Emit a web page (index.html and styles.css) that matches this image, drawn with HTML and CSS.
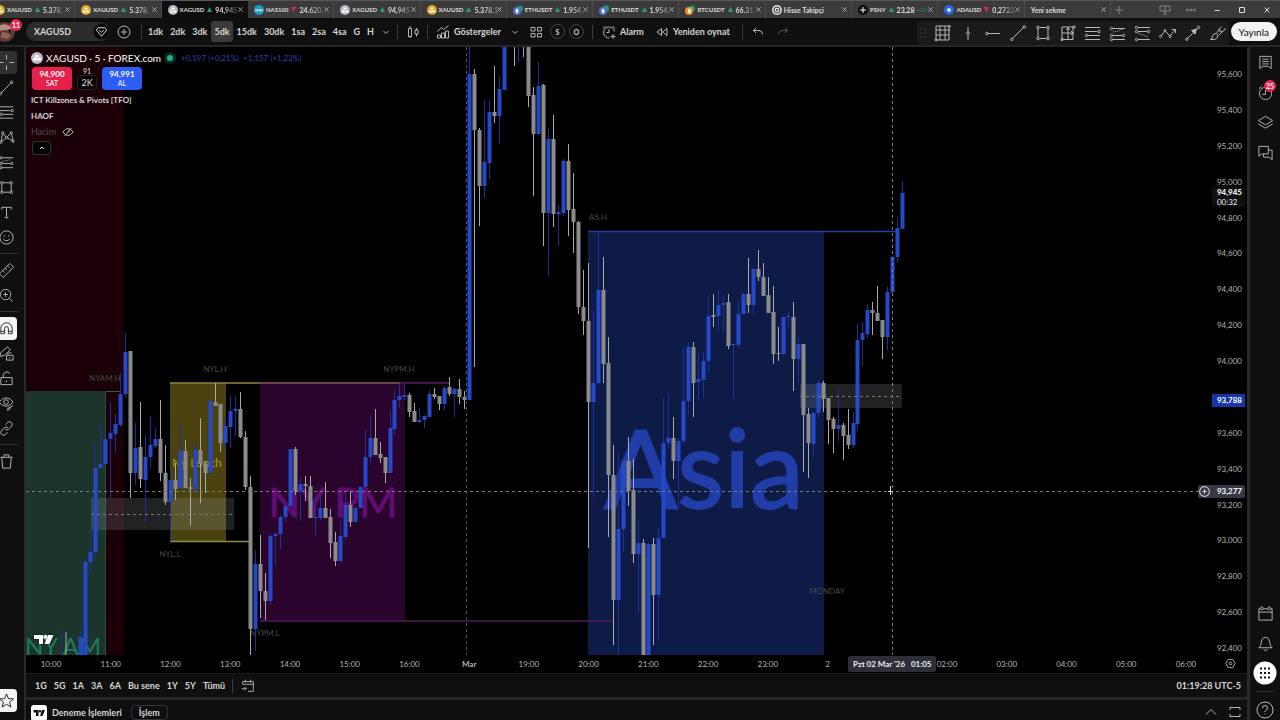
FILE: index.html
```html
<!DOCTYPE html>
<html lang="tr">
<head>
<meta charset="utf-8">
<title>XAGUSD 94,945</title>
<link rel="stylesheet" href="styles.css">
</head>
<body>
<div class="app">
<header class="tabbar">
  <nav class="tabs" id="tabs" aria-label="Sekmeler"></nav>
  <div class="window-controls">
    <button class="win" aria-label="Yeni sekme aç"><svg viewBox="0 0 10 10"><path d="M5 1v8M1 5h8"/></svg></button>
    <button class="win win-layout" aria-label="Düzen"><svg viewBox="0 0 12 10"><path d="M1 1h10v5H1zM6 1v8M4 9h4"/></svg></button>
    <button class="win" aria-label="Menü"><svg viewBox="0 0 10 10"><circle cx="1.5" cy="5" r="1"/><circle cx="5" cy="5" r="1"/><circle cx="8.500" cy="5" r="1"/></svg></button>
    <button class="win lit" aria-label="Küçült"><svg viewBox="0 0 10 10"><path d="M2.500 5.500h5"/></svg></button>
    <button class="win lit" aria-label="Büyüt"><svg viewBox="0 0 10 10"><path d="M2.500 2.500h5v5h-5z"/></svg></button>
    <button class="win lit" aria-label="Kapat"><svg viewBox="0 0 10 10"><path d="M2.500 2.500l5 5M7.500 2.500l-5 5"/></svg></button>
  </div>
</header>

<div class="toolbar">
  <div class="avatar-wrap">
    <svg class="avatar" viewBox="0 0 20 20"><circle cx="10" cy="10" r="10" fill="#5b3a35"/><path d="M3 5q7-6 14 1l-1 4-5-2-7 1z" fill="#b58b7b"/><path d="M5 11l5-1 6 3-3 4-7-1z" fill="#8f5f54"/><path d="M2 9l4 2-1 4zM12 8l4-1v4z" fill="#231817"/></svg>
    <span class="badge">11</span>
  </div>
  <button class="symbol"><span>XAGUSD</span><svg viewBox="0 0 18 18"><circle cx="9" cy="9" r="8.500" fill="#0a0a0a" stroke="none"/><path d="M5.500 5h7l2 2.500L9 14 3.500 7.500zM6.500 7.500L9 10l2.500-2.500"/></svg></button>
  <button class="tool add" aria-label="Karşılaştır"><svg viewBox="0 0 18 18"><circle cx="9" cy="9" r="6"/><path d="M9 6v6M6 9h6"/></svg></button>
  <i class="vline"></i>
  <div class="intervals">
    <button>1dk</button><button>2dk</button><button>3dk</button><button class="on">5dk</button><button>15dk</button><button>30dk</button><button>1sa</button><button>2sa</button><button>4sa</button><button>G</button><button>H</button>
  </div>
  <button class="tool chev" aria-label="Diğer aralıklar"><svg viewBox="0 0 18 18"><path d="M6.500 8L9 10.500 11.500 8"/></svg></button>
  <i class="vline"></i>
  <button class="tool candle-type" aria-label="Mumlar"><svg viewBox="0 0 18 18"><path d="M4.500 5.500h3v8h-3zM6 3v2.500M6 13.500V15M11 7h3v4h-3zM12.500 5v2M12.500 11v2.500"/></svg></button>
  <i class="vline"></i>
  <button class="labelled ind"><svg viewBox="0 0 18 18"><path d="M3.500 15v-3h3v3zM7.500 15v-5h3v5zM11.500 15V8h3v7zM3.500 8.500l4-4 2 2 5-4"/></svg>Göstergeler</button>
  <button class="tool chev" aria-label="Sık kullanılan göstergeler"><svg viewBox="0 0 18 18"><path d="M6.500 8L9 10.500 11.500 8"/></svg></button>
  <button class="tool" aria-label="Şablonlar"><svg viewBox="0 0 18 18"><path d="M4 4.500h4v3.500H4zM10.500 4.500h4v3.500h-4zM4 10.500h4v3.500H4zM10.500 10.500h4v3.500h-4z"/></svg></button>
  <button class="ring">S</button><button class="ring">O</button>
  <i class="vline"></i>
  <button class="labelled alarm"><svg viewBox="0 0 18 18"><path d="M14.500 8.500a5.500 5.500 0 1 0-5 6.500M9 6v3.500H6.500M3 5.500L5.500 3M12.500 3L15 5.500M13 11v5M10.500 13.500h5"/></svg>Alarm</button>
  <button class="labelled replay"><svg viewBox="0 0 18 18"><path d="M8.500 5.500v7L4 9zM14 5.500v7L9.500 9z"/></svg>Yeniden oynat</button>
  <i class="vline"></i>
  <button class="tool wide" aria-label="Geri al"><svg viewBox="0 0 18 18"><path d="M7 5L4.500 7.500 7 10M4.500 7.500H10q3.500 0 3.500 4"/></svg></button>
  <button class="tool wide dim" aria-label="Yinele"><svg viewBox="0 0 18 18"><path d="M11 5l2.500 2.500L11 10M13.500 7.500H8q-3.500 0-3.500 4"/></svg></button>
  <div class="drawbar">
    <svg class="grip" viewBox="0 0 8 12"><g fill="#555"><circle cx="2" cy="2" r=".7"/><circle cx="6" cy="2" r=".7"/><circle cx="2" cy="6" r=".7"/><circle cx="6" cy="6" r=".7"/><circle cx="2" cy="10" r=".7"/><circle cx="6" cy="10" r=".7"/></g></svg>
    <button aria-label="Izgara"><svg viewBox="0 0 18 18"><path d="M2 2h13v14H2zM6 2v14M11 2v14M2 6h14M2 11h13"/><circle cx="15.500" cy="2.500" r="1"/><circle cx="2" cy="16" r="1"/></svg></button>
    <button aria-label="Dikey çizgi"><svg viewBox="0 0 18 18"><path d="M9 3v4.500M9 10.500V16"/><circle cx="9" cy="9" r="1.300"/></svg></button>
    <button aria-label="Yatay ışın"><svg viewBox="0 0 18 18"><path d="M4 9.500h12"/><circle cx="3" cy="9.500" r="1.300"/></svg></button>
    <button aria-label="Trend çizgisi"><svg viewBox="0 0 18 18"><path d="M3.500 14.500l11-11"/><circle cx="2.800" cy="15.300" r="1.200"/><circle cx="15.300" cy="3" r="1.200"/></svg></button>
    <button aria-label="Dikdörtgen"><svg viewBox="0 0 18 18"><path d="M4 3.500h10v11H4z"/><g fill="#1a1a1a"><circle cx="4" cy="3.500" r="1.300"/><circle cx="14" cy="3.500" r="1.300"/><circle cx="4" cy="14.500" r="1.300"/><circle cx="14" cy="14.500" r="1.300"/></g></svg></button>
    <button aria-label="Fiyat aralığı"><svg viewBox="0 0 18 18"><path d="M3 3h11v12.500H3zM9 3v12.500M3 9h12M7 6l2-2 2 2M12 7l2 2-2 2"/><circle cx="15" cy="3" r="1.200"/><circle cx="3" cy="15.500" r="1.200"/></svg></button>
    <button aria-label="Fibonacci"><svg viewBox="0 0 18 18"><path d="M1 3.500h15M1 7.500h12M4 11.500h12M1 15.500h15"/><circle cx="15" cy="7.500" r="1.200"/><circle cx="2.500" cy="11.500" r="1.200"/></svg></button>
    <button aria-label="Uzun pozisyon"><svg viewBox="0 0 18 18"><path d="M4 4.500h12M4 11.500h9M4 15.500h12"/><path d="M4 8l5-1 5-2" stroke-dasharray="1 1"/><circle cx="2.500" cy="4.500" r="1.200"/><circle cx="2.500" cy="11.500" r="1.200"/><circle cx="14.500" cy="11.500" r="1.200"/><circle cx="2.500" cy="15.500" r="1.200"/></svg></button>
    <button aria-label="Kısa pozisyon"><svg viewBox="0 0 18 18"><path d="M4 3.500h12M4 7.500h9M4 15.500h12"/><path d="M4 9l5 2 5 2" stroke-dasharray="1 1"/><circle cx="2.500" cy="3.500" r="1.200"/><circle cx="2.500" cy="7.500" r="1.200"/><circle cx="14.500" cy="7.500" r="1.200"/><circle cx="2.500" cy="15.500" r="1.200"/></svg></button>
    <button aria-label="Yol"><svg viewBox="0 0 18 18"><path d="M2 12l4-5 5 5 5-6M12.500 5.500H16.500V9"/><circle cx="1.500" cy="12.500" r="1"/><circle cx="6" cy="6.500" r="1"/><circle cx="11" cy="12.500" r="1"/></svg></button>
    <button aria-label="Ok"><svg viewBox="0 0 18 18"><path d="M3.500 14.500l10-10"/><path d="M12.500 5l-5 1.500L11 10z" fill="#bbb"/><circle cx="2.800" cy="15.200" r="1.200"/><circle cx="14.500" cy="3.500" r="1.300"/></svg></button>
    <button aria-label="Fırça"><svg viewBox="0 0 18 18"><path d="M1.500 15.500q2-1 2-3.500 1-3 4-2.500 2 1.500 1 4-2 3-7 2zM8 9l2.500-4.500 2-1.500M9.500 11.500l7-7M11 5.500v2l2 .5 3.500-3"/></svg></button>
  </div>
  <button class="publish">Yayınla</button>
</div>

<div class="body">
<aside class="left">
  <button class="hover" aria-label="İmleç"><svg viewBox="0 0 18 18"><path d="M9 1v5M9 12v5M1 9h5M12 9h5"/></svg></button>
  <button aria-label="Trend"><svg viewBox="0 0 18 18"><path d="M3 15L14 4"/><circle cx="2.500" cy="15.500" r="1.300"/><circle cx="14.500" cy="3.500" r="1.300"/></svg></button>
  <button aria-label="Fib düzeltmesi"><svg viewBox="0 0 18 18"><path d="M2 3h14M2 7h11M5 11h11M2 15h14"/><circle cx="15" cy="7" r="1.300"/><circle cx="3.500" cy="11" r="1.300"/></svg></button>
  <button aria-label="Desenler"><svg viewBox="0 0 18 18"><path d="M3 14L5 4l4 5 5-5 2 9-7-4z"/><g fill="#0f0f0f"><circle cx="3" cy="14" r="1.200"/><circle cx="5" cy="4" r="1.200"/><circle cx="9" cy="9" r="1.200"/><circle cx="14" cy="4" r="1.200"/><circle cx="16" cy="13" r="1.200"/></g></svg></button>
  <button aria-label="Tahmin"><svg viewBox="0 0 18 18"><path d="M4 4h12M4 10h9M4 14.500h12"/><path d="M4 8l5-1 4-1" stroke-dasharray="1 1"/><circle cx="3" cy="4" r="1.200"/><circle cx="3" cy="10" r="1.200"/><circle cx="14.500" cy="10" r="1.200"/><circle cx="3" cy="14.500" r="1.200"/></svg></button>
  <button aria-label="Şekiller"><svg viewBox="0 0 18 18"><path d="M4 4h10v10H4z"/><g fill="#0f0f0f"><circle cx="4" cy="4" r="1.300"/><circle cx="14" cy="4" r="1.300"/><circle cx="4" cy="14" r="1.300"/><circle cx="14" cy="14" r="1.300"/></g></svg></button>
  <button aria-label="Metin"><svg viewBox="0 0 18 18"><path d="M4 6V3.500h10V6M9 3.500v11M7 14.500h4"/></svg></button>
  <button aria-label="İfade"><svg viewBox="0 0 18 18"><circle cx="9" cy="9" r="7"/><path d="M5.500 10.500q3.500 4 7 0M6.500 6.500v1.500M11.500 6.500v1.500"/></svg></button>
  <hr>
  <button aria-label="Ölç"><svg viewBox="0 0 18 18"><path d="M1.500 12.500l11-11 4 4-11 11zM5 9l2 2M7.500 6.500l2 2M10 4l2 2"/></svg></button>
  <button aria-label="Yakınlaştır"><svg viewBox="0 0 18 18"><circle cx="8" cy="8" r="5.500"/><path d="M12 12l3.500 3.500M8 5.500v5M5.500 8h5"/></svg></button>
  <hr>
  <button class="active" aria-label="Mıknatıs"><svg viewBox="0 0 18 18"><path d="M3 14.500V9a6 6 0 0 1 12 0v5.500h-4V9a2 2 0 0 0-4 0v5.500zM3 12h4M11 12h4"/></svg></button>
  <button aria-label="Çizim modu"><svg viewBox="0 0 18 18"><path d="M2 12l1-4 7-6 3 3-6 6zM9 11h7v5H9zM10.500 11V9q2-2 4 0M12.500 13v1.500"/></svg></button>
  <button aria-label="Kilitle"><svg viewBox="0 0 18 18"><path d="M3 8h12v7.500H3zM5.500 8V5q1-3 4-3 2.500 0 3 2M9 11v2"/></svg></button>
  <button aria-label="Gizle"><svg viewBox="0 0 18 18"><path d="M1 7.500q8-9 15 0-7 9-15 0zM10 15q1-2 3-2 1 2-3 3zM13 13l3-2"/><circle cx="8.500" cy="7.500" r="2.500"/></svg></button>
  <button aria-label="Bağla"><svg viewBox="0 0 18 18"><path d="M8 5l3-3q3-1 4 2 .5 1-1 3l-3 3q-2 1-3.500 0M10 13l-3 3q-3 1-4-2-.5-1 1-3l3-3q2-1 3.500 0"/></svg></button>
  <hr>
  <button aria-label="Sil"><svg viewBox="0 0 18 18"><path d="M2.500 4.500h13M6.500 4.500V2h5v2.500M4 4.500l1 11.500h8l1-11.500"/></svg></button>
  <button class="active star" aria-label="Favoriler"><svg viewBox="0 0 18 18"><path d="M9 2l2 5 5.500.3-4.300 3.400 1.500 5.300L9 13l-4.700 3 1.500-5.300L1.500 7.300 7 7z"/></svg></button>
</aside>

<main class="center">
  <section class="chart">
    <svg class="plot" id="plot" viewBox="26 47 1221 608" preserveAspectRatio="xMinYMin slice" role="img" aria-label="XAGUSD 5 dakikalık mum grafiği">
      <g stroke="none">
        <rect x="26" y="47" width="98" height="608" fill="#1b0007"/>
        <rect x="26" y="391" width="80" height="264" fill="#1b352d"/>
        <rect x="170" y="383" width="56" height="159" fill="#4a4310"/>
        <rect x="260" y="383" width="145" height="238" fill="#2b042e"/>
        <rect x="588" y="231" width="236" height="424" fill="#0e1b47"/>
      </g>
      <path d="M106 391.500h14" stroke="#3c5950"/><path d="M105.500 391v264" stroke="#235043"/>
      <path d="M170 383h90M170 541.500h79" stroke="#8f8746" stroke-width="1.500"/>
      <path d="M260 383h140" stroke="#704052" stroke-width="2"/><path d="M400 383h50" stroke="#44154a" stroke-width="2"/><path d="M260 621h353" stroke="#54195c" stroke-width="1.500"/>
      <path d="M588 231.500h309" stroke="#243f9a" stroke-width="1.500"/><path d="M598.500 231v59" stroke="#2440a8"/>
      <g fill="#8e94a0" fill-opacity=".22" stroke="none"><rect x="91" y="498" width="143" height="32"/><rect x="800" y="384" width="102" height="24"/></g>
      <g class="marks"><text x="105" y="381">NYAM.H</text><text x="215" y="372">NYL.H</text><text x="170" y="557">NYL.L</text><text x="265" y="636">NYPM.L</text><text x="399" y="372">NYPM.H</text><text x="598" y="220">AS.H</text><text x="827" y="594">MONDAY</text></g>
      <g class="zones"><text class="z-am" x="63" y="655">NY AM</text><text class="z-lunch" x="197" y="467">Ny Lunch</text><text class="z-pm" x="333" y="517">NY PM</text><text class="z-asia" x="704" y="508">Asia</text></g>
      <g id="candles"></g>
      <g fill="none" stroke-dasharray="3 3"><path d="M91 514.500h143M800 396.500h102" stroke="#77786f"/><path d="M466.500 47v608" stroke="#46528c"/><path d="M26 491.500h1174M892.500 47v608" stroke="#7d7d7d"/></g>
      <path d="M890.500 486v9M888 491.500h5" stroke="#ddd"/>
      <path d="M34 635h9v9h-4v-5h-5zM48 635h5.500l-4 9H44.500z" fill="#fff" stroke="#111" stroke-width="1" paint-order="stroke"/><circle cx="45.500" cy="637" r="2" fill="#fff"/>
    </svg>

    <div class="legend">
      <div class="title"><svg class="metal" viewBox="0 0 12 12"><circle cx="6" cy="6" r="6" fill="#b9bcc6"/><path d="M4.500 3h3l1 2.500h-5zM2.500 6h3l.8 2.500H1.800zM6.700 6h3l.8 2.500H6z" fill="#fff"/></svg><h1>XAGUSD · 5 · FOREX.com</h1><i class="dot"></i><span class="delta">+0,197 (+0,21%)</span><span class="delta">+1,157 (+1,23%)</span></div>
      <div class="trade"><button class="sell"><b>94,900</b><span>SAT</span></button><div class="spread"><span>91</span><b>2K</b></div><button class="buy"><b>94,991</b><span>AL</span></button></div>
      <p>ICT Killzones &amp; Pivots [TFO]</p>
      <p>HAOF</p>
      <p class="muted">Hacim <svg viewBox="0 0 12 10"><path d="M1 5q5-7 10 0-5 7-10 0zM2.500 9l7-8M6 3.500q1.500.500 1 2"/></svg></p>
      <button class="collapse" aria-label="Daralt"><svg viewBox="0 0 8 8"><path d="M2 5l2-2 2 2"/></svg></button>
    </div>

    <div class="prices"><span>95,600</span><span>95,400</span><span>95,200</span><span>95,000</span><span>94,800</span><span>94,600</span><span>94,400</span><span>94,200</span><span>94,000</span><span class="covered">93,800</span><span>93,600</span><span>93,400</span><span>93,200</span><span>93,000</span><span>92,800</span><span>92,600</span><span>92,400</span></div>
    <div class="tag last"><b>94,945</b><span>00:32</span></div>
    <div class="tag level">93,788</div>
    <div class="tag cross"><svg viewBox="0 0 12 12"><circle cx="6" cy="6" r="4.500"/><path d="M6 4v4M4 6h4"/></svg>93,277</div>
  </section>

  <div class="times"><span>10:00</span><span>11:00</span><span>12:00</span><span>13:00</span><span>14:00</span><span>15:00</span><span>16:00</span><b>Mar</b><span>19:00</span><span>20:00</span><span>21:00</span><span>22:00</span><span>23:00</span><span>2</span><strong><em>Pzt 02 Mar '26 &nbsp; 01:05</em></strong><span>02:00</span><span>03:00</span><span>04:00</span><span>05:00</span><span>06:00</span>
    <button class="axis-set" aria-label="Eksen ayarları"><svg viewBox="0 0 12 12"><path d="M3.500 1.500h5L11 6l-2.500 4.500h-5L1 6z"/><circle cx="6" cy="6" r="1.500"/></svg></button></div>

  <div class="ranges"><button>1G</button><button>5G</button><button>1A</button><button>3A</button><button>6A</button><button>Bu sene</button><button>1Y</button><button>5Y</button><button>Tümü</button><i class="vline"></i><button class="goto" aria-label="Tarihe git"><svg viewBox="0 0 18 18"><path d="M3 7V4h12v11H9M3 7h12M6 2v3M12 2v3M2 12h5M5 10l2 2-2 2"/></svg></button><time>01:19:28 UTC-5</time></div>

  <footer class="panel"><svg class="tv" viewBox="0 0 16 16"><rect width="16" height="16" rx="3" fill="#fff"/><path d="M2.500 5h5v6H5V7.500H2.500zM11 5h3l-2.500 6H9z" fill="#111"/><circle cx="9" cy="6.200" r="1.200" fill="#111"/></svg><span>Deneme İşlemleri</span><button class="order">İşlem</button>
    <div class="panel-end"><button aria-label="Paneli aç"><svg viewBox="0 0 14 14"><path d="M2 9.500l5-5 5 5"/></svg></button><button aria-label="Paneli büyüt"><svg viewBox="0 0 14 14"><path d="M2 5V2.500h10V5M2 9v2.500h10V9"/></svg></button></div></footer>
</main>

<aside class="right">
  <button aria-label="İzleme listesi"><svg viewBox="0 0 18 18"><path d="M3 2.500h12v13l-3-2.500H6l-3 2.500zM5.500 5.500h7M5.500 8h7M5.500 10.500h7"/></svg></button>
  <button aria-label="Alarmlar"><svg viewBox="0 0 18 18"><circle cx="9" cy="10" r="6.500"/><path d="M9 6.500V11H5.500M2 5l3-2.500"/></svg><span class="badge">25</span></button>
  <button aria-label="Nesne ağacı"><svg viewBox="0 0 18 18"><path d="M1.500 7L9 2.500 16.500 7 9 11.500zM1.500 10.500L9 15l7.500-4.500"/></svg></button>
  <button aria-label="Sohbet"><svg viewBox="0 0 18 18"><path d="M2 2.500h10v8H5l-3 2.500zM12 6.500h4v10l-3-2.500H7v-3.500"/></svg></button>
  <button class="first-low" aria-label="Takvim"><svg viewBox="0 0 18 18"><path d="M2 4h14v12H2zM2 7.500h14"/><g fill="#0f0f0f"><circle cx="5" cy="3.500" r="1.500"/><circle cx="13" cy="3.500" r="1.500"/></g></svg></button>
  <button aria-label="Bildirimler"><svg viewBox="0 0 18 18"><path d="M2 13.500q2.500-2 2.500-6 1-5 4.500-5t4.500 5q0 4 2.500 6zM7 15.500q2 2 4 0"/></svg></button>
  <button aria-label="Ürünler"><svg class="apps" viewBox="0 0 24 24"><circle cx="12" cy="12" r="11.500" fill="#fff" stroke="none"/><path d="M7 6.500h2v2H7zM11 6.500h2v2h-2zM15 6.500h2v2h-2zM7 11h2v2H7zM11 11h2v2h-2zM15 11h2v2h-2zM7 15.500h2v2H7zM11 15.500h2v2h-2zM15 15.500h2v2h-2z" fill="#111" stroke="none"/></svg></button>
  <hr>
  <button class="help" aria-label="Yardım"><svg viewBox="0 0 18 18"><circle cx="9" cy="9" r="8"/><path d="M6.500 7q0-2.500 2.500-2.500T11.500 7q0 1.200-1.500 2-1 .5-1 2M9 12.500v1"/></svg></button>
</aside>
</div>
</div>
<script src="chart.js"></script>
</body>
</html>
```
FILE: styles.css
```css
* { box-sizing: border-box; }
body { margin: 0; background: #000; color: #d6d6d6; font: 9px/12px Lato, "Noto Sans", sans-serif; overflow: hidden; }
button { background: none; border: 0; padding: 0; margin: 0; color: inherit; font: inherit; cursor: pointer; display: flex; align-items: center; justify-content: center; flex: none; }
svg { fill: none; stroke: #b8b8b8; stroke-width: 1; display: block; flex: none; }
.app { height: 100vh; display: flex; flex-direction: column; }

.tabbar { height: 18px; flex: none; display: flex; background: #3b3b3b; border-top: 1px solid #585858; }
.tabs { flex: 1; min-width: 0; display: grid; grid-template-columns: repeat(13, minmax(0, 1fr)); margin-left: -11px; }
.tab { display: flex; align-items: center; gap: 2px; padding: 0 3px 0 6px; border-right: 1px solid #4b4b4b; font-size: 7px; font-weight: 700; color: #ddd; min-width: 0; }
.tab.current { background: #0e0e0e; border-color: #0e0e0e; }
.tab a { flex: 1; min-width: 0; display: flex; align-items: center; gap: 2px; color: inherit; text-decoration: none; white-space: nowrap; }
.tab .quoted { font-size: 6px; margin-right: 1px; }
.price { -webkit-mask-image: linear-gradient(90deg, #000 40%, rgba(0, 0, 0, .25)); mask-image: linear-gradient(90deg, #000 40%, rgba(0, 0, 0, .25)); }
.price.whole { -webkit-mask-image: none; mask-image: none; }
.tab .logo { width: 10px; height: 10px; stroke: none; }
.tab .close svg { width: 7px; height: 7px; }
.arrow { width: 5px; height: 5px; stroke: none; margin-right: 1px; }
.extra { color: #2f6f58; font-size: 6px; }
.window-controls { width: 169px; flex: none; display: flex; align-items: center; justify-content: space-between; padding: 0 8px 0 3px; }
.win svg { width: 10px; height: 10px; stroke: #858585; }
.win.win-layout { margin-left: 20px; }
.win-layout svg { width: 12px; }
.win.lit svg { stroke: #ddd; }

.toolbar { height: 27px; flex: none; background: #0f0f0f; display: flex; align-items: center; font-size: 9px; font-weight: 700; }
.avatar-wrap { width: 26px; flex: none; position: relative; height: 27px; }
.avatar { width: 20px; height: 20px; margin: 4px 0 0 -5px; stroke: none; }
.badge { position: absolute; background: #e5264d; color: #fff; font-size: 7px; line-height: 10px; font-weight: 700; border-radius: 6px; padding: 1px 2px; }
.avatar-wrap .badge { left: 10px; top: 1px; min-width: 12px; text-align: center; }
.symbol { width: 84px; height: 19px; border-radius: 10px; background: #2c2c2c; justify-content: space-between; padding: 0 0 0 8px; }
.symbol svg { width: 17px; height: 17px; stroke: #ddd; }
.tool { width: 24px; height: 22px; }
.tool svg, .labelled svg { width: 18px; height: 18px; }
.tool.add { width: 28px; }
.tool.chev { width: 17px; }
.tool.wide { width: 25px; }
.tool.candle-type { width: 23px; }
.dim svg { stroke: #555; }
.vline { width: 1px; height: 14px; background: #3c3c3c; flex: none; margin: 0 3px; }
.intervals { display: flex; gap: 1px; }
.intervals button { padding: 0 3px; height: 21px; border-radius: 3px; }
.intervals .on { background: #3b3b3b; }
.labelled { gap: 2px; padding: 0 3px; height: 22px; }
.ind { padding-right: 6px; }
.alarm { padding-right: 6px; }
.replay { padding-right: 9px; }
.ring { width: 15px; height: 15px; border: 1px solid #444; border-radius: 50%; font-size: 7px; margin: 0 2px; }
.ring + .vline { margin: 0 4px 0 6px; }
.drawbar { margin-left: auto; height: 24px; padding: 0 2px; display: flex; align-items: center; gap: 7px; background: #1a1a1a; border-radius: 3px; align-self: flex-end; }
.drawbar svg { width: 18px; height: 18px; }
.drawbar .grip { width: 8px; height: 12px; stroke: none; }
.publish { height: 19px; padding: 0 8px; margin: 0 3px 0 2px; border-radius: 10px; background: #f2f2f2; color: #111; font-weight: 400; font-size: 10px; }

.body { flex: 1; min-height: 0; display: flex; border-top: 2px solid #262626; }
.left { width: 26px; flex: none; background: #0f0f0f; border-right: 2px solid #292929; padding: 3px 0 8px; display: flex; flex-direction: column; overflow: hidden; }
.left button { height: 23px; width: 22px; margin: 1px 0 1px -5px; border-radius: 4px; padding-left: 1px; }
.left svg { width: 17px; height: 17px; }
.left hr, .right hr { border: 0; height: 1px; background: #333; margin: 3px 6px 4px 0; flex: none; width: 18px; }
.left .hover { background: #303030; }
.left .active { background: #f4f4f4; }
.left .active svg { stroke: #222; }
.left .star { margin-top: auto; margin-bottom: 0; }
.center { flex: 1; min-width: 0; display: flex; flex-direction: column; }
.chart { flex: 1; min-height: 0; position: relative; overflow: hidden; display: flex; justify-content: flex-end; }
.plot { position: absolute; inset: 0; width: 100%; height: 100%; }
.plot text { stroke: none; text-anchor: middle; }
.marks text { font-size: 8px; fill: #494949; }
.plot .zones text { stroke-width: 1; }
.plot .z-am { font-size: 24px; fill: #1f7a59; }
.plot .z-lunch { font-size: 12px; fill: #a79a20; }
.plot .z-pm { font-size: 41px; fill: #5f0d70; stroke: #5f0d70; }
.plot .zones .z-asia { font-size: 108px; fill: #203da8; stroke: #203da8; stroke-width: 2; }

.legend { position: absolute; left: 5px; top: 4px; display: flex; flex-direction: column; align-items: flex-start; }
.title { display: flex; align-items: center; gap: 3px; height: 14px; }
.metal { width: 12px; height: 12px; stroke: none; }
.title h1 { margin: 0; font-size: 10px; line-height: 14px; font-weight: 400; color: #fff; }
.dot { width: 6px; height: 6px; border-radius: 50%; background: #20b284; box-shadow: 0 0 0 3px #052a1e; margin: 0 5px 0 3px; }
.delta { color: #2b43b8; margin-right: 1px; font-size: 8px; }
.trade { display: flex; gap: 5px; margin: 2px 0 2px 1px; align-items: flex-end; }
.trade button { width: 40px; height: 23px; border-radius: 4px; flex-direction: column; color: #fff; font-size: 7px; line-height: 9px; }
.trade button b { font-size: 8px; }
.sell { background: #e3214b; }
.buy { background: #2d5cf6; }
.spread { width: 20px; display: flex; flex-direction: column; text-align: center; font-size: 7px; line-height: 8px; color: #ddd; }
.spread b { background: #060606; border: 1px solid #222; border-radius: 3px; font-size: 9px; line-height: 13px; font-weight: 400; }
.legend p { margin: 0; height: 16px; line-height: 16px; font-size: 8px; font-weight: 700; display: flex; align-items: center; gap: 6px; }
.legend .muted { color: #5b4a4d; font-weight: 400; font-size: 9px; }
.legend .muted svg { width: 12px; height: 10px; }
.collapse { width: 19px; height: 14px; margin: 1px; background: #060606; border: 1px solid #333; border-radius: 3px; }
.collapse svg { width: 8px; height: 8px; stroke: #eee; }

.prices { position: relative; width: 42px; padding: 20px 5px 0 0; display: flex; flex-direction: column; justify-content: space-between; text-align: right; font-size: 8px; line-height: 14px; color: #b4b4b4; }
.covered { visibility: hidden; }
.tag { position: absolute; right: 2px; height: 13px; line-height: 13px; font-size: 8px; font-weight: 700; color: #fff; padding: 0 3px 0 5px; display: flex; align-items: center; }
.tag.last { top: 23%; height: auto; flex-direction: column; align-items: flex-start; line-height: 10px; background: #101010; color: #eee; }
.last span { font-weight: 400; }
.tag.level { top: 57%; background: #1635a6; }
.tag.cross { top: 72%; background: #363843; padding-left: 0; gap: 6px; border-radius: 2px; }
.cross svg { width: 13px; height: 13px; stroke: #ccc; }

.times { height: 18px; flex: none; display: flex; justify-content: space-between; align-items: center; padding: 0 41px 0 5px; font-size: 8px; position: relative; color: #b4b4b4; }
.times > span, .times > b, .times > strong { width: 40px; flex: none; text-align: center; }
.times strong { display: flex; justify-content: center; }
.times em { flex: none; width: 88px; margin-left: 10px; background: #2d2e38; color: #eee; font-style: normal; line-height: 16px; border-radius: 2px; }
.axis-set { position: absolute; right: 11px; top: 3px; }
.axis-set svg { width: 11px; height: 11px; }
.ranges { height: 24px; flex: none; background: #0f0f0f; border-top: 1px solid #1c1c1c; display: flex; align-items: center; gap: 7px; padding: 0 6px 0 9px; font-weight: 700; }
.ranges .vline { margin: 0; }
.goto svg { width: 16px; height: 16px; }
.ranges time { margin-left: auto; }
.panel { height: 23px; flex: none; background: #0f0f0f; border-top: 3px solid #272727; display: flex; align-items: flex-start; gap: 5px; padding: 5px 5px 0; font-weight: 700; overflow: hidden; line-height: 16px; }
.tv { width: 16px; height: 16px; stroke: none; }
.order { border: 1px solid #333; border-radius: 4px; padding: 0 7px; height: 15px; margin-left: 4px; line-height: 13px; }
.panel-end { margin-left: auto; display: flex; gap: 10px; }
.panel-end svg { width: 14px; height: 14px; }

.right { width: 33px; flex: none; background: #0f0f0f; border-left: 3px solid #292929; display: flex; flex-direction: column; align-items: center; overflow: hidden; }
.right button { width: 30px; height: 30px; position: relative; }
.right svg { width: 17px; height: 17px; }
.right .apps { width: 24px; height: 24px; }
.right .badge { right: 4px; top: 3px; }
.right .first-low { margin-top: auto; }
.right hr { margin: 3px 0 8px; }
.right .help { height: 20px; }
.right .help svg { width: 18px; height: 18px; }
```
FILE: chart.js
```js
const tabData = [
  ["gold", "XAUUSD", 1, "5.378,"], ["gold", "XAUUSD", 1, "5.378,"], ["silver", "XAGUSD", 1, "94,945"],
  ["nas", "NAS100", 0, "24.620,"], ["silver", "XAGUSD", 1, "94,945"], ["gold", "XAUUSD", 1, "5.378,1"],
  ["eth", "ETHUSDT", 1, "1.954,"], ["eth", "ETHUSDT", 1, "1.954,"], ["btc", "BTCUSDT", 1, "66.31"],
  ["target", "Hisse Takipçi"], ["psny", "PSNY", 1, "23,28", "+20"], ["ada", "ADAUSD", 0, "0,2723"], ["", "Yeni sekme"]
];
const bars = '<path d="M4 2.500h2l1 2H3zM2 5.500h2.500l.5 2H1.500zM5.500 5.500H8l.5 2H5z" fill="#fff"/>';
const logos = {
  gold: '<circle cx="5" cy="5" r="5" fill="#e0a521"/>' + bars,
  silver: '<circle cx="5" cy="5" r="5" fill="#b4b7c2"/>' + bars,
  nas: '<circle cx="5" cy="5" r="5" fill="#1a9dc4"/><path d="M2 4v2.500M3.500 4v2.500M5 4v2.500M6.500 4v2.500M8 4v2.500" stroke="#fff" stroke-width=".8"/>',
  eth: '<circle cx="7" cy="3.500" r="3" fill="#1c9d7d"/><circle cx="4" cy="6" r="4" fill="#5270d8"/><path d="M4 3l1.700 3L4 9 2.300 6z" fill="#fff"/>',
  btc: '<circle cx="7" cy="3.500" r="3" fill="#1c9d7d"/><circle cx="4" cy="6" r="4" fill="#ef922c"/><path d="M3 4h2.500v4H3z" fill="#fff"/>',
  target: '<circle cx="5" cy="5" r="5" fill="#ddd"/><circle cx="5" cy="5" r="3" fill="none" stroke="#333"/><circle cx="5" cy="5" r="1" fill="#333"/>',
  psny: '<circle cx="5" cy="5" r="5" fill="#0b0b0b"/><path d="M5 2v6M2 5h6" stroke="#fff"/>',
  ada: '<circle cx="5" cy="5" r="5" fill="#2769d8"/><circle cx="5" cy="5" r="2" fill="#cfe0ff"/>'
};
document.getElementById("tabs").innerHTML = tabData.map(([logo, name, up, price, extra], i) => `
  <div class="tab${i === 2 ? " current" : ""}">
    <a href="#">
      ${logo ? `<svg class="logo" viewBox="0 0 10 10">${logos[logo]}</svg>` : ""}<span${price ? ' class="quoted"' : ""}>${name}</span>
      ${price ? `<svg class="arrow" viewBox="0 0 6 6"><path d="${up ? "M3 0l3 6H0z" : "M0 0h6L3 6z"}" fill="${up ? "#20a37a" : "#e5264d"}"/></svg><span class="price${extra ? " whole" : ""}">${price}</span>` : ""}
      ${extra ? `<span class="extra">${extra}</span>` : ""}
    </a>
    <button class="close" aria-label="Sekmeyi kapat"><svg viewBox="0 0 8 8"><path d="M1.500 1.500l5 5M6.500 1.500l-5 5"/></svg></button>
  </div>`).join("");

// Each candle: x, high, body top, body bottom, low, rising (1) or falling (0)
const candles = [
[61,630,655,655,655,1],[66,632,655,655,655,0],[80.5,628,637,655,655,1],[85.5,559,562,655,655,1],[90.5,530,552,562,572,1],[95.5,443,468,552,557,1],
[100.5,423,464,468,468,1],[105.5,438,439,464,464,1],[110.5,402,433,439,498,1],[115.5,414,424,434,453,1],[120.5,373,394,425,427,1],
[125.5,333,352,394,397,1],[130.5,351,351,473,498,0],[135.5,423,448,473,485,1],[140.5,402,447,479,488,0],[145.5,435,457,480,523,1],
[150.5,416,445,457,468,1],[155.5,428,439,446,448,1],[160.5,400,439,473,481,0],[165.5,445,473,502,505,0],[170.5,470,480,502,541,1],
[175.5,463,480,489,500,0],[180.5,423,451,488,490,1],[185.5,440,451,488,488,0],[190.5,478,487,489,526,0],[195.5,442,450,489,493,1],
[200.5,418,450,464,503,0],[205.5,462,464,473,493,0],[210.5,401,401,473,474,1],[215.5,383,402,406,406,0],[220.5,404,404,443,452,0],
[225.5,416,426,443,449,1],[230.5,396,411,427,448,1],[235.5,396,409,411,436,1],[240.5,392,409,437,438,0],[245.5,431,437,487,490,0],
[250.5,476,487,629,655,0],[255.5,550,564,629,651,1],[260.5,535,564,591,618,0],[265.5,573,591,601,620,0],[270.5,533,536,601,605,1],
[275.5,532,534,536,566,1],[280.5,515,517,534,549,1],[285.5,505,506,517,522,1],[290.5,449,449,506,507,1],[295.5,447,449,491,495,0],
[300.5,477,484,491,521,1],[305.5,476,484,486,501,0],[310.5,476,486,518,518,0],[315.5,497,517,518,536,1],[320.5,493,508,518,520,1],
[325.5,482,508,518,518,0],[330.5,509,517,543,558,0],[335.5,532,542,561,566,0],[340.5,521,536,561,563,1],[345.5,493,505,537,539,1],
[350.5,491,505,522,527,0],[355.5,506,508,522,522,1],[360.5,487,487,508,508,1],[365.5,430,457,487,488,1],[370.5,416,438,457,465,1],
[375.5,409,438,455,455,0],[380.5,442,454,458,463,0],[385.5,457,457,473,483,0],[390.5,410,428,473,473,1],[394.5,390,400,429,435,1],
[399.5,383,396,400,407,1],[404.5,384,395,397,400,1],[409.5,393,395,412,417,0],[414.5,403,411,422,422,0],[419.5,408,420,422,423,1],
[424.5,415,416,420,428,1],[429.5,390,394,417,417,1],[434.5,388,394,397,399,0],[439.5,396,396,404,410,0],[444.5,386,388,404,410,1],
[449.5,377,387,394,396,0],[454.5,388,389,394,417,1],[459.5,379,389,397,404,0],[464.5,391,397,400,409,0],[469.5,47,74,400,400,1],
[474.5,69,74,130,367,0],[479.5,128,130,186,226,0],[484.5,100,162,186,198,1],[489.5,101,112,163,179,1],[494.5,66,112,116,123,0],
[499.5,77,89,116,144,1],[504.5,47,47,90,90,1],[514.5,47,47,47,66,0],[518.5,47,47,47,62,1],[523.5,47,47,47,57,0],
[528.5,47,47,96,107,0],[533.5,87,95,134,196,0],[538.5,62,86,134,135,1],[543.5,84,85,213,246,0],[548.5,128,139,213,276,1],
[553.5,115,139,214,227,0],[558.5,204,212,214,246,1],[563.5,159,161,213,216,1],[568.5,144,161,210,236,0],[573.5,173,209,222,253,0],
[578.5,221,222,307,314,0],[583.5,270,307,321,335,0],[588.5,263,321,402,548,0],[593.5,310,383,402,497,1],[598.5,232,290,383,383,1],
[603.5,257,290,364,383,0],[608.5,337,363,475,537,0],[613.5,445,475,600,645,0],[618.5,453,529,600,655,1],[623.5,457,461,529,552,1],
[628.5,437,461,491,506,0],[633.5,459,490,554,563,0],[638.5,520,543,554,612,1],[643.5,539,543,655,655,0],[648.5,543,544,655,655,1],
[653.5,538,544,595,645,0],[658.5,528,538,595,640,1],[663.5,398,443,538,538,1],[668.5,394,438,443,448,1],[673.5,417,438,461,479,0],
[678.5,438,441,461,508,1],[683.5,348,401,441,443,1],[688.5,343,347,401,415,1],[693.5,342,347,383,417,0],[698.5,353,379,382,400,1],
[703.5,352,361,380,398,1],[708.5,294,316,361,373,1],[713.5,294,315,317,327,0],[718.5,290,305,316,333,1],[723.5,295,303,305,333,1],
[728.5,294,302,346,349,0],[733.5,344,344,345,399,1],[738.5,300,314,345,348,1],[743.5,293,294,314,314,1],[748.5,258,294,305,313,0],
[753.5,268,269,305,315,1],[758.5,250,269,277,281,0],[763.5,263,277,296,296,0],[768.5,277,295,313,313,0],[773.5,286,312,354,364,0],
[778.5,327,353,354,361,0],[783.5,317,317,354,355,1],[788.5,312,316,317,327,1],[793.5,302,317,359,391,0],[798.5,338,344,359,383,1],
[803.5,344,344,415,472,0],[808.5,408,414,443,478,0],[813.5,412,413,444,457,1],[818.5,381,383,413,418,1],[823.5,381,383,399,412,0],
[828.5,398,398,420,444,0],[833.5,417,419,429,453,0],[838.5,388,425,429,441,1],[843.5,423,425,436,460,0],[848.5,409,435,445,449,0],
[853.5,412,423,445,448,1],[857.5,324,340,424,431,1],[862.5,322,333,340,366,1],[867.5,304,310,334,338,1],[872.5,302,310,313,335,0],
[877.5,286,313,321,321,0],[882.5,320,320,337,359,0],[887.5,287,292,337,350,1],[892.5,256,257,292,293,1],[897.5,217,228,257,262,1],[902.5,181,193,229,229,1]
];
document.getElementById("candles").innerHTML = candles.map(([x, high, top, bottom, low, up]) =>
  `<path d="M${x} ${high}V${low}" stroke="${up ? "#1c3193" : "#aaa9a6"}"/>` +
  (bottom > top ? `<rect x="${x - 2}" y="${top}" width="4" height="${bottom - top}" fill="${up ? "#2549c9" : "#8b8b8b"}" stroke="none"/>` : "")).join("");
```
